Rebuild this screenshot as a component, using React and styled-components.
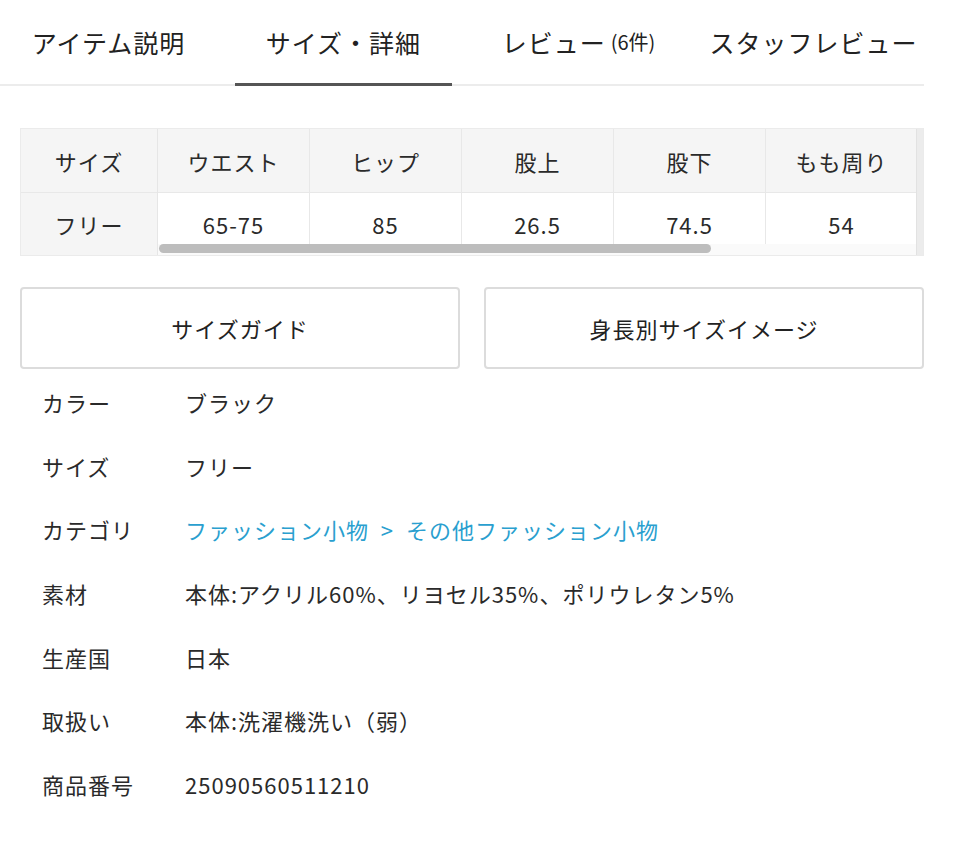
import React from "react";
import styled, { createGlobalStyle } from "styled-components";

const GlobalStyle = createGlobalStyle`
  body {
    margin: 0;
    background: #ffffff;
    font-family: "Noto Sans CJK JP", "Noto Sans", sans-serif;
    color: #2a2a2a;
  }
`;

const Page = styled.div`
  width: 924px;
`;

const TabBar = styled.div`
  display: flex;
  gap: 18px;
  height: 84px;
  border-bottom: 2px solid #ececec;
`;

const Tab = styled.div`
  width: 217px;
  flex: none;
  display: flex;
  align-items: center;
  justify-content: center;
  font-size: 25px;
  letter-spacing: 1px;
  color: #222222;
  box-sizing: border-box;
  border-bottom: 3px solid ${(p) => (p.$active ? "#555555" : "transparent")};
  margin-bottom: -2px;
  white-space: nowrap;
`;

const TabCount = styled.span`
  font-size: 20px;
  letter-spacing: 0;
  margin-left: 5px;
`;

const Content = styled.div`
  padding-left: 20px;
`;

const SizeTable = styled.div`
  margin-top: 42px;
  display: flex;
  border: 1px solid #ebebeb;
  background: #f4f4f4;
  height: 126px;
`;

const FixedCol = styled.div`
  width: 136px;
  flex: none;
  display: flex;
  flex-direction: column;
  border-right: 1px solid #e6e6e6;
`;

const Cell = styled.div`
  display: flex;
  align-items: center;
  justify-content: center;
  font-size: 22px;
  letter-spacing: 1px;
  color: #2a2a2a;
  box-sizing: border-box;
  height: ${(p) => p.$h}px;
  padding-top: ${(p) => (p.$head ? 0 : 10)}px;
  background: ${(p) => (p.$head ? "#f5f5f5" : "#ffffff")};
  border-bottom: ${(p) => (p.$head ? "1px solid #e8e8e8" : "none")};
`;

const FixedCell = styled(Cell)`
  background: #f5f5f5;
  padding-top: 0;
  flex: ${(p) => (p.$grow ? 1 : "none")};
`;

const ScrollArea = styled.div`
  flex: 1;
  position: relative;
  overflow: hidden;
  background: #fafafa;
  padding-bottom: 12px;
`;

const Grid = styled.div`
  display: grid;
  grid-template-columns: repeat(5, 152px);
  width: 760px;
  background: #ffffff;
`;

const DataCell = styled(Cell)`
  border-right: 1px solid #e8e8e8;
`;

const Thumb = styled.div`
  position: absolute;
  left: 1px;
  bottom: 2px;
  width: 552px;
  height: 9px;
  border-radius: 5px;
  background: #bdbdbd;
`;

const EdgeStrip = styled.div`
  width: 6px;
  flex: none;
  background: #ececec;
  border-left: 1px solid #e2e2e2;
`;

const ButtonRow = styled.div`
  margin-top: 31px;
  display: grid;
  grid-template-columns: 1fr 1fr;
  gap: 24px;
`;

const GuideButton = styled.div`
  height: 82px;
  box-sizing: border-box;
  border: 2px solid #dcdcdc;
  border-radius: 4px;
  display: flex;
  align-items: center;
  justify-content: center;
  font-size: 22px;
  letter-spacing: 1px;
  color: #222222;
`;

const DetailList = styled.div`
  margin-top: 1px;
`;

const DetailRow = styled.div`
  display: flex;
  align-items: center;
  height: 63.7px;
  font-size: 22px;
  letter-spacing: 1px;
`;

const Label = styled.div`
  width: 165px;
  padding-left: 22px;
  box-sizing: border-box;
  flex: none;
  color: #2a2a2a;
`;

const Value = styled.div`
  color: ${(p) => (p.$link ? "#2a9fcf" : "#2a2a2a")};
  white-space: pre;
`;

const heads = ["ウエスト", "ヒップ", "股上", "股下", "もも周り"];
const values = ["65-75", "85", "26.5", "74.5", "54"];

const details = [
  ["カラー", "ブラック"],
  ["サイズ", "フリー"],
  ["カテゴリ", "ファッション小物  >  その他ファッション小物", true],
  ["素材", "本体:アクリル60%、リヨセル35%、ポリウレタン5%"],
  ["生産国", "日本"],
  ["取扱い", "本体:洗濯機洗い（弱）"],
  ["商品番号", "25090560511210"],
];

export default function App() {
  return (
    <Page>
      <GlobalStyle />
      <TabBar>
        <Tab>アイテム説明</Tab>
        <Tab $active>サイズ・詳細</Tab>
        <Tab>
          レビュー<TabCount>(6件)</TabCount>
        </Tab>
        <Tab>スタッフレビュー</Tab>
      </TabBar>
      <Content>
        <SizeTable>
          <FixedCol>
            <FixedCell $head $h={64}>サイズ</FixedCell>
            <FixedCell $grow>フリー</FixedCell>
          </FixedCol>
          <ScrollArea>
            <Grid>
              {heads.map((h) => (
                <DataCell key={h} $head $h={64}>
                  {h}
                </DataCell>
              ))}
              {values.map((v, i) => (
                <DataCell key={i} $h={51}>
                  {v}
                </DataCell>
              ))}
            </Grid>
            <Thumb />
          </ScrollArea>
          <EdgeStrip />
        </SizeTable>
        <ButtonRow>
          <GuideButton>サイズガイド</GuideButton>
          <GuideButton>身長別サイズイメージ</GuideButton>
        </ButtonRow>
        <DetailList>
          {details.map(([k, v, link]) => (
            <DetailRow key={k}>
              <Label>{k}</Label>
              <Value $link={link}>{v}</Value>
            </DetailRow>
          ))}
        </DetailList>
      </Content>
    </Page>
  );
}
